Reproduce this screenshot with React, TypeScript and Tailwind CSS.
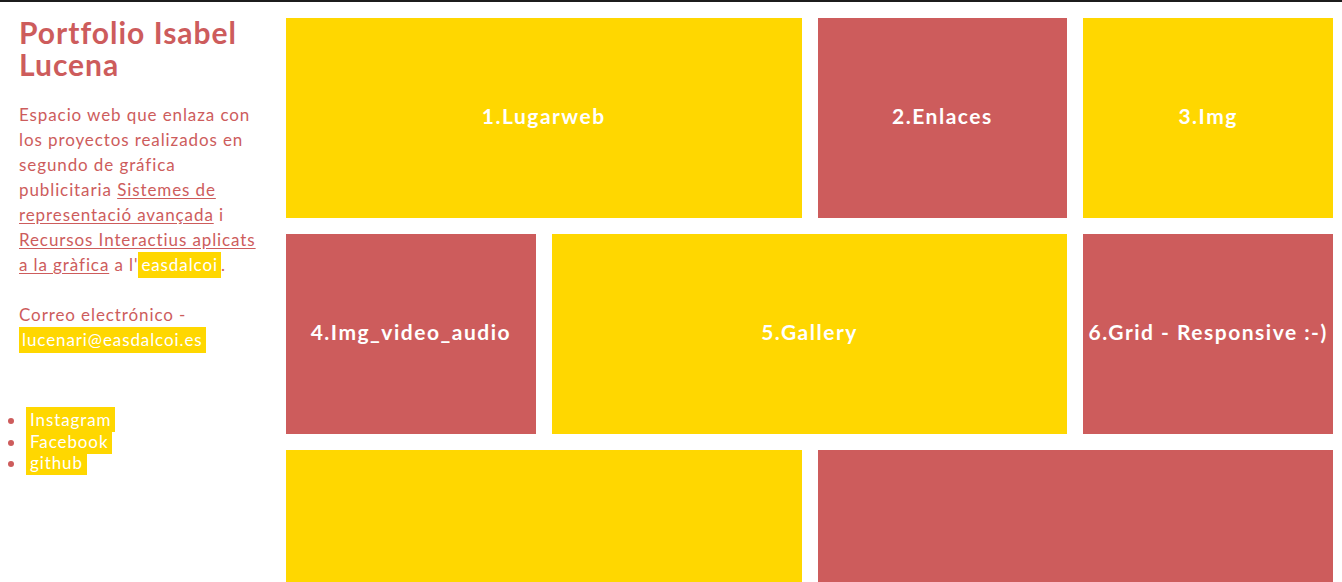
const tiles = [
  { label: "1.Lugarweb", span: "col-span-2", color: "bg-[#ffd700]" },
  { label: "2.Enlaces", span: "", color: "bg-[#cd5c5c]" },
  { label: "3.Img", span: "", color: "bg-[#ffd700]" },
  { label: "4.Img_video_audio", span: "", color: "bg-[#cd5c5c]" },
  { label: "5.Gallery", span: "col-span-2", color: "bg-[#ffd700]" },
  { label: "6.Grid - Responsive :-)", span: "", color: "bg-[#cd5c5c]" },
  { label: "", span: "col-span-2", color: "bg-[#ffd700]" },
  { label: "", span: "col-span-2", color: "bg-[#cd5c5c]" },
];

function Mark({ children }: { children: React.ReactNode }) {
  return (
    <span className="inline-block h-[26px] leading-[26px] px-[3px] bg-[#ffd700] text-white">
      {children}
    </span>
  );
}

export default function App() {
  return (
    <div className="h-[582px] overflow-hidden bg-white border-t-2 border-[#1c1c1c] font-['Lato',sans-serif] text-[#cd5c5c]">
      <div className="flex pt-4 pr-[9px]">
        {/* sidebar */}
        <aside className="w-[286px] shrink-0 pl-[19px]">
          <h1 className="text-[30px] leading-[32px] font-bold tracking-[1px] -mt-[2px]">
            Portfolio Isabel
            <br />
            Lucena
          </h1>

          <p className="mt-[22px] text-[17px] leading-[25px] tracking-[0.9px] whitespace-nowrap">
            Espacio web que enlaza con
            <br />
            los proyectos realizados en
            <br />
            segundo de gráfica
            <br />
            publicitaria <a className="underline underline-offset-2">Sistemes de</a>
            <br />
            <a className="underline underline-offset-2">representació avançada</a> i
            <br />
            <a className="underline underline-offset-2">Recursos Interactius aplicats</a>
            <br />
            <a className="underline underline-offset-2">a la gràfica</a> a l'<Mark>easdalcoi</Mark>.
          </p>

          <p className="mt-[24px] text-[17px] leading-[25px] tracking-[0.9px] whitespace-nowrap">
            Correo electrónico -
            <br />
            <Mark>lucenari@easdalcoi.es</Mark>
          </p>

          <ul className="mt-[56px] -ml-[19px] pl-[26px] list-disc text-[17px] leading-[21.5px] tracking-[0.9px]">
            {["Instagram", "Facebook", "github"].map((s) => (
              <li key={s}>
                <span className="bg-[#ffd700] text-white px-[4px] py-[2px]">{s}</span>
              </li>
            ))}
          </ul>
        </aside>

        {/* tiles */}
        <main className="flex-1 grid grid-cols-4 gap-4 auto-rows-[200px]">
          {tiles.map((t, i) => (
            <div
              key={i}
              className={`${t.span} ${t.color} flex items-center justify-center pb-[4px] text-white font-bold text-[21px] tracking-[1.5px] whitespace-nowrap`}
            >
              {t.label}
            </div>
          ))}
        </main>
      </div>
    </div>
  );
}
